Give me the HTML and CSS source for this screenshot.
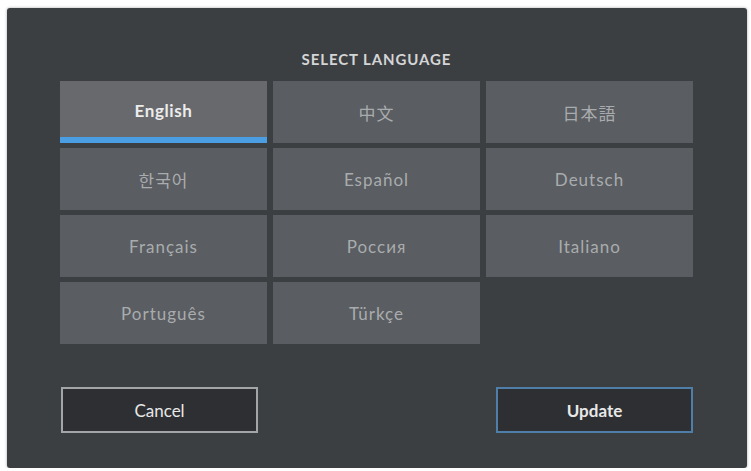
FILE: index.html
```html
<!DOCTYPE html>
<html lang="en">
<head>
	<meta charset="UTF-8">
	<title>Select Language</title>
	<link rel="stylesheet" href="styles.css">
</head>
<body>
	<section class="panel">
		<h1 class="title">SELECT LANGUAGE</h1>
		<ul class="langs">
			<li class="active">English</li>
			<li>中文</li>
			<li lang="ja">日本語</li>
			<li lang="ko">한국어</li>
			<li>Español</li>
			<li>Deutsch</li>
			<li>Français</li>
			<li>Россия</li>
			<li>Italiano</li>
			<li>Português</li>
			<li>Türkçe</li>
		</ul>
		<div class="actions">
			<button class="btn">Cancel</button>
			<button class="btn btn-primary">Update</button>
		</div>
	</section>
</body>
</html>
```

FILE: styles.css
```css
body{
	margin:0;
	background:#fff;
	font-family:Lato,"Open Sans","Noto Sans CJK SC",sans-serif;
}
ul,li{
	margin:0;
	padding:0;
	list-style:none;
}
.panel{
	box-sizing:border-box;
	width:740px;
	height:460px;
	margin:8px 0 0 7px;
	padding:42px 54px 0 53px;
	background:#3c3f42;
	border-radius:3px;
	box-shadow:0 0 3px rgba(0,0,0,.35);
}
.title{
	margin:0 0 12px;
	text-align:center;
	font-size:15px;
	font-weight:700;
	letter-spacing:.9px;
	line-height:19px;
	color:#d4d5d6;
}
.langs{
	display:grid;
	grid-template-columns:repeat(3,1fr);
	grid-auto-rows:62px;
	column-gap:6px;
	row-gap:5px;
}
.langs li{
	display:flex;
	align-items:center;
	justify-content:center;
	background:#5a5d61;
	color:#a9acae;
	font-size:17px;
	letter-spacing:1px;
}
.langs li.active{
	background:#68696d;
	color:#ececec;
	font-weight:700;
	letter-spacing:.6px;
	padding-top:2px;
	box-sizing:border-box;
	border-bottom:6px solid #4b9ee2;
}
.actions{
	display:flex;
	justify-content:space-between;
	margin-top:43px;
	padding-left:1px;
}
.btn{
	width:197px;
	height:46px;
	background:#2d2f32;
	border:2px solid #a3a5a7;
	color:#e8e8e8;
	font-family:Lato,"Open Sans",sans-serif;
	font-size:17px;
	cursor:pointer;
}
.btn-primary{
	border-color:#4f7fa9;
	font-weight:700;
}
```
